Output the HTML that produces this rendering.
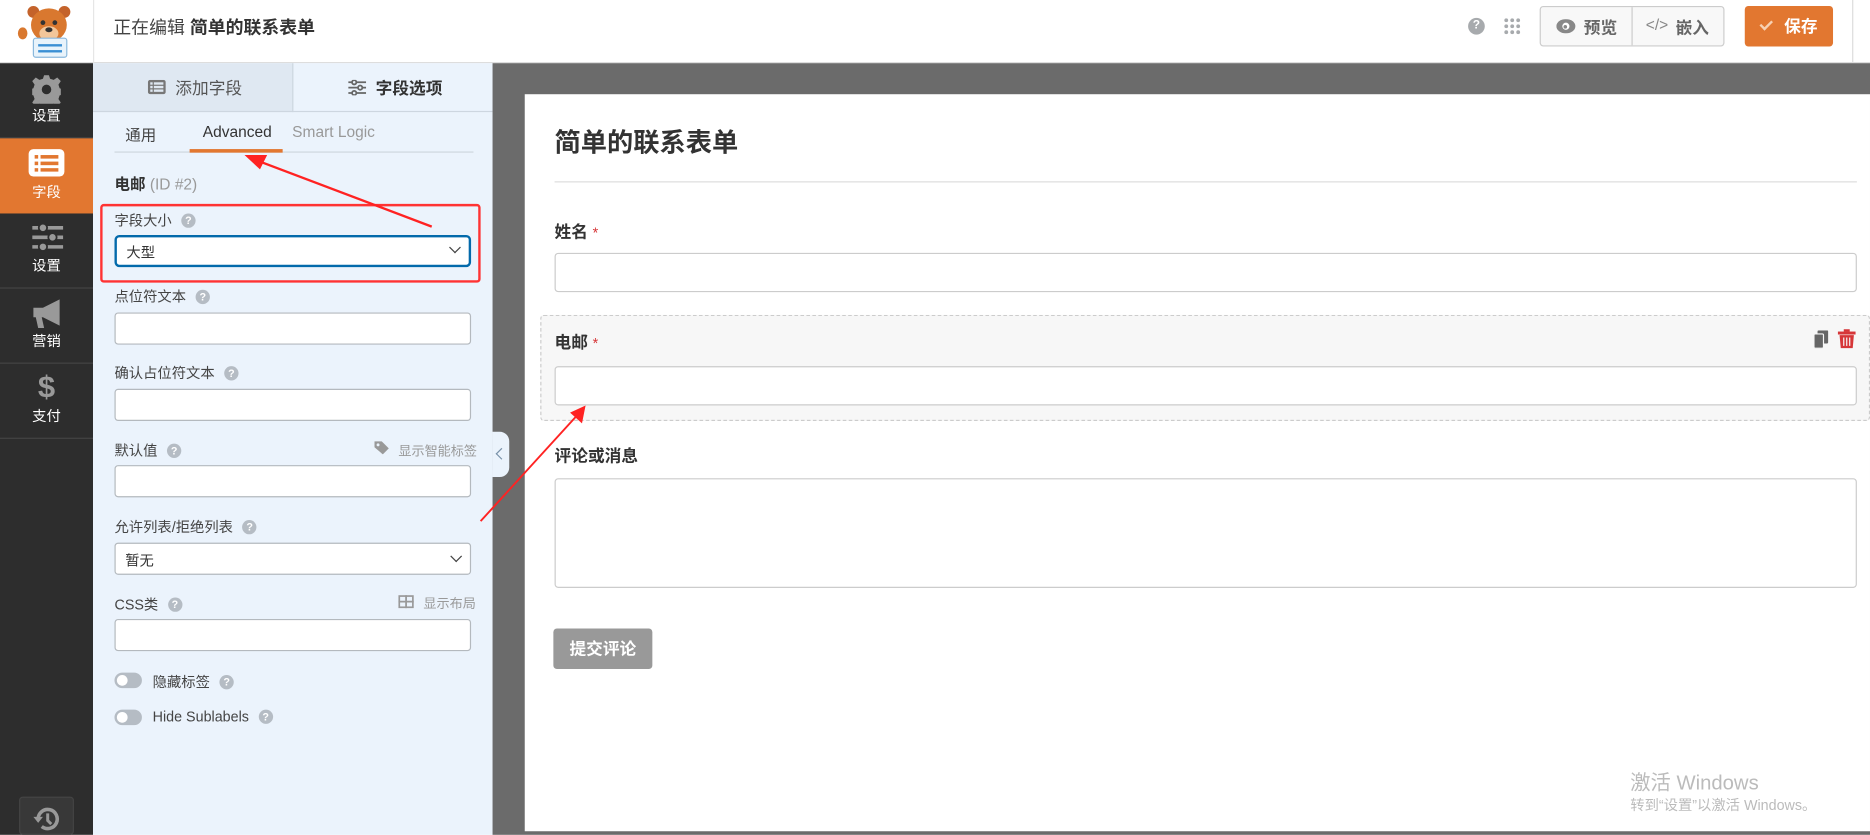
<!DOCTYPE html>
<html><head><meta charset="utf-8"><style>
*{box-sizing:border-box;margin:0;padding:0}
html,body{width:1870px;height:834px;overflow:hidden;background:#fff;font-family:"Liberation Sans","Noto Sans CJK SC",sans-serif}
#w{position:absolute;left:0;top:0;width:1568px;height:700px;transform:scale(1.19260);transform-origin:0 0}
.a{position:absolute}
.q{display:inline-block;width:12px;height:12px;border-radius:50%;background:#b5bcc4;color:#fff;font-size:9px;text-align:center;line-height:12px;font-weight:bold;margin-left:8px;vertical-align:1px}
.lbl{position:absolute;left:96px;font-size:12px;color:#444}
.inp{position:absolute;left:96px;width:299px;height:27px;background:#fff;border:1px solid #b4b9be;border-radius:3px}
.chev{position:absolute;right:8px;top:7px;width:7px;height:7px;border-right:1.5px solid #444;border-bottom:1.5px solid #444;transform:rotate(45deg)}
.sb{position:absolute;left:0;width:78px;height:63px;color:#fff;font-size:12px;text-align:center;border-bottom:1px solid #444}
.sb span{position:absolute;left:0;right:0;bottom:10px}
.fin{position:absolute;left:465px;width:1092px;background:#fff;border:1px solid #ccc;border-radius:3px}
.fl{position:absolute;left:465px;font-size:14px;color:#333;font-weight:bold}
.tg{position:absolute;left:96px;width:23px;height:13px;border-radius:7px;background:#b5bcc4}
.tg:after{content:"";position:absolute;left:2px;top:2px;width:9px;height:9px;border-radius:50%;background:#fff}
</style></head><body><div id="w">
<!-- top bar -->
<div class="a" style="left:0;top:0;width:1568px;height:53px;background:#fff;border-bottom:1px solid #ddd"></div>
<div class="a" style="left:78px;top:0;width:1px;height:53px;background:#e5e5e5"></div>
<svg class="a" style="left:14px;top:4px" width="52" height="46" viewBox="0 0 52 46">
<circle cx="14" cy="6" r="5" fill="#c4632b"/><circle cx="40" cy="6" r="5" fill="#c4632b"/>
<ellipse cx="27" cy="17" rx="15" ry="14" fill="#d9782f"/><ellipse cx="27" cy="24" rx="8" ry="6" fill="#f2c69a"/>
<circle cx="22" cy="15" r="2" fill="#333"/><circle cx="32" cy="15" r="2" fill="#333"/><ellipse cx="27" cy="21" rx="3" ry="2" fill="#333"/>
<ellipse cx="5" cy="24" rx="4" ry="5" fill="#d9782f"/>
<rect x="14" y="28" width="28" height="16" rx="2" fill="#e8f3fb" stroke="#8ab8dc"/>
<rect x="18" y="33" width="20" height="2" fill="#3a8fd4"/><rect x="18" y="38" width="20" height="2" fill="#3a8fd4"/></svg>
<div class="a" style="left:95px;top:12px;font-size:15px;color:#444">正在编辑 <b style="color:#333">简单的联系表单</b></div>
<div class="a" style="left:1231px;top:15px;width:14px;height:14px;border-radius:50%;background:#a7aaad;color:#fff;font-size:10px;font-weight:bold;text-align:center;line-height:14px">?</div>
<svg class="a" style="left:1261px;top:15px" width="14" height="14"><g fill="#a7aaad"><circle cx="2" cy="2" r="1.6"/><circle cx="7" cy="2" r="1.6"/><circle cx="12" cy="2" r="1.6"/><circle cx="2" cy="7" r="1.6"/><circle cx="7" cy="7" r="1.6"/><circle cx="12" cy="7" r="1.6"/><circle cx="2" cy="12" r="1.6"/><circle cx="7" cy="12" r="1.6"/><circle cx="12" cy="12" r="1.6"/></g></svg>
<div class="a" style="left:1291px;top:5px;width:155px;height:34px;border:1px solid #ccc;border-radius:3px;background:#f8f8f8"></div>
<div class="a" style="left:1368px;top:6px;width:1px;height:32px;background:#ccc"></div>
<svg class="a" style="left:1305px;top:16px" width="16" height="12"><ellipse cx="8" cy="6" rx="8" ry="6" fill="#888"/><circle cx="8" cy="6" r="3" fill="#fff"/><circle cx="7.5" cy="6.5" r="1.5" fill="#888"/></svg>
<div class="a" style="left:1328px;top:13px;font-size:14px;color:#666;font-weight:bold">预览</div>
<div class="a" style="left:1380px;top:13px;font-size:13px;color:#888">&lt;/&gt;</div>
<div class="a" style="left:1405px;top:13px;font-size:14px;color:#666;font-weight:bold">嵌入</div>
<div class="a" style="left:1463px;top:5px;width:74px;height:34px;border-radius:3px;background:#e27730;color:#fff;font-size:14px;font-weight:bold;line-height:34px;padding-left:33px">保存</div>
<div class="a" style="left:1476px;top:17px;width:10px;height:6px;border-left:2px solid #f7d1b3;border-bottom:2px solid #f7d1b3;transform:rotate(-45deg)"></div>
<div class="a" style="left:1553px;top:0;width:1px;height:53px;background:#ddd"></div>
<!-- sidebar -->
<div class="a" style="left:0;top:53px;width:78px;height:647px;background:#2d2d2d"></div>
<div class="sb" style="top:53px"><svg class="a" style="left:27px;top:10px" width="24" height="24" viewBox="0 0 24 24"><path fill="#999" d="M10 0h4l1 3 3 1 3-2 3 3-2 3 1 3 3 1v4l-3 1-1 3 2 3-3 3-3-2-3 1-1 3h-4l-1-3-3-1-3 2-3-3 2-3-1-3-3-1v-4l3-1 1-3-2-3 3-3 3 2 3-1z"/><circle cx="12" cy="12" r="4" fill="#2d2d2d"/></svg><span>设置</span></div>
<div class="sb" style="top:116px;background:#e27730;border:0"><div class="a" style="left:24px;top:9px;width:30px;height:23px;background:#fff;border-radius:4px"></div><svg class="a" style="left:29px;top:14px" width="20" height="14"><g fill="#e27730"><rect x="0" y="0" width="3" height="3"/><rect x="5" y="0" width="15" height="3"/><rect x="0" y="5.5" width="3" height="3"/><rect x="5" y="5.5" width="15" height="3"/><rect x="0" y="11" width="3" height="3"/><rect x="5" y="11" width="15" height="3"/></g></svg><span>字段</span></div>
<div class="sb" style="top:179px"><svg class="a" style="left:27px;top:8px" width="26" height="24"><g stroke="#999" stroke-width="3"><line x1="0" y1="4" x2="26" y2="4"/><line x1="0" y1="12" x2="26" y2="12"/><line x1="0" y1="20" x2="26" y2="20"/></g><g fill="#999" stroke="#2d2d2d" stroke-width="1.5"><circle cx="9" cy="4" r="3.5"/><circle cx="17" cy="12" r="3.5"/><circle cx="9" cy="20" r="3.5"/></g></svg><span>设置</span></div>
<div class="sb" style="top:242px"><svg class="a" style="left:26px;top:8px" width="28" height="26"><path fill="#999" d="M2 8h8l14-7v22l-14-7H9l2 9H6L4 16H2z"/></svg><span>营销</span></div>
<div class="sb" style="top:305px"><div class="a" style="left:0;right:0;top:4px;font-size:26px;font-weight:bold;color:#999">$</div><span>支付</span></div>
<div class="a" style="left:16px;top:668px;width:46px;height:32px;background:#383838;border:1px solid #444;border-radius:3px"></div>
<svg class="a" style="left:28px;top:677px" width="22" height="20" viewBox="0 0 22 20"><path d="M4 10a8 8 0 1 1 3 6" fill="none" stroke="#999" stroke-width="3"/><path d="M0 8h8l-4 5z" fill="#999"/><path d="M12 5v6l3 3" fill="none" stroke="#999" stroke-width="2.5"/></svg>
<!-- panel -->
<div class="a" style="left:78px;top:53px;width:335px;height:647px;background:#ebf3fc"></div>
<div class="a" style="left:78px;top:53px;width:168px;height:41px;background:#dfe8f2;border-right:1px solid #cdd6e0;border-bottom:1px solid #cdd6e0"></div>
<div class="a" style="left:246px;top:93px;width:167px;height:1px;background:#cdd6e0"></div>
<svg class="a" style="left:124px;top:67px" width="15" height="12"><rect width="15" height="12" rx="2" fill="#777"/><g fill="#dfe8f2"><rect x="2" y="2" width="2" height="2"/><rect x="5" y="2" width="8" height="2"/><rect x="2" y="5" width="2" height="2"/><rect x="5" y="5" width="8" height="2"/><rect x="2" y="8" width="2" height="2"/><rect x="5" y="8" width="8" height="2"/></g></svg>
<div class="a" style="left:147px;top:64px;font-size:14px;color:#555">添加字段</div>
<svg class="a" style="left:292px;top:67px" width="15" height="13"><g stroke="#666" stroke-width="1.5" fill="#ebf3fc"><line x1="0" y1="2" x2="15" y2="2"/><line x1="0" y1="6.5" x2="15" y2="6.5"/><line x1="0" y1="11" x2="15" y2="11"/><circle cx="5" cy="2" r="1.8"/><circle cx="10" cy="6.5" r="1.8"/><circle cx="5" cy="11" r="1.8"/></g></svg>
<div class="a" style="left:315px;top:64px;font-size:14px;color:#333;font-weight:bold">字段选项</div>
<div class="a" style="left:105px;top:103px;font-size:13px;color:#444">通用</div>
<div class="a" style="left:170px;top:103px;font-size:13px;color:#333">Advanced</div>
<div class="a" style="left:245px;top:103px;font-size:13px;color:#999">Smart Logic</div>
<div class="a" style="left:96px;top:127px;width:301px;height:1px;background:#ced6de"></div>
<div class="a" style="left:159px;top:125px;width:78px;height:3px;background:#e27730"></div>
<div class="a" style="left:96px;top:144px;font-size:13px;color:#333"><b>电邮</b> <span style="color:#999">(ID #2)</span></div>
<div class="lbl" style="top:176px">字段大小<span class="q">?</span></div>
<div class="inp" style="top:197px;border:2px solid #036aab;border-radius:4px"><div class="a" style="left:8px;top:4px;font-size:12px;color:#333">大型</div><div class="chev" style="top:5px"></div></div>
<div class="a" style="left:84px;top:171px;width:319px;height:66px;border:2px solid #f33;border-radius:3px"></div>
<div class="lbl" style="top:240px">点位符文本<span class="q">?</span></div>
<div class="inp" style="top:262px"></div>
<div class="lbl" style="top:304px">确认占位符文本<span class="q">?</span></div>
<div class="inp" style="top:326px"></div>
<div class="lbl" style="top:369px">默认值<span class="q">?</span></div>
<svg class="a" style="left:314px;top:370px" width="13" height="11"><path d="M0 0h6l6 6-5 5-7-6z" fill="#999"/><circle cx="3" cy="3" r="1.2" fill="#ebf3fc"/></svg>
<div class="a" style="left:334px;top:370px;font-size:11px;color:#999">显示智能标签</div>
<div class="inp" style="top:390px"></div>
<div class="lbl" style="top:433px">允许列表/拒绝列表<span class="q">?</span></div>
<div class="inp" style="top:455px"><div class="a" style="left:8px;top:5px;font-size:12px;color:#333">暂无</div><div class="chev"></div></div>
<div class="lbl" style="top:498px">CSS类<span class="q">?</span></div>
<svg class="a" style="left:334px;top:499px" width="13" height="11"><rect x=".75" y=".75" width="11.5" height="9.5" fill="none" stroke="#999" stroke-width="1.5"/><line x1="6.5" y1="0" x2="6.5" y2="11" stroke="#999" stroke-width="1.5"/><line x1="0" y1="5.5" x2="13" y2="5.5" stroke="#999" stroke-width="1.5"/></svg>
<div class="a" style="left:355px;top:498px;font-size:11px;color:#999">显示布局</div>
<div class="inp" style="top:519px"></div>
<div class="tg" style="top:564px"></div><div class="a" style="left:128px;top:563px;font-size:12px;color:#444">隐藏标签<span class="q">?</span></div>
<div class="tg" style="top:595px"></div><div class="a" style="left:128px;top:594px;font-size:12px;color:#444">Hide Sublabels<span class="q">?</span></div>
<!-- preview area -->
<div class="a" style="left:413px;top:53px;width:1155px;height:647px;background:#6b6b6b"></div>
<div class="a" style="left:413px;top:362px;width:14px;height:38px;background:#ebf3fc;border-radius:0 8px 8px 0"></div>
<div class="a" style="left:417px;top:377px;width:7px;height:7px;border-left:1.5px solid #7890a8;border-bottom:1.5px solid #7890a8;transform:rotate(45deg)"></div>
<div class="a" style="left:440px;top:79px;width:1128px;height:618px;background:#fff"></div>
<div class="a" style="left:465px;top:102px;font-size:22px;font-weight:bold;color:#333">简单的联系表单</div>
<div class="a" style="left:465px;top:152px;width:1092px;height:1px;background:#ddd"></div>
<div class="fl" style="top:184px">姓名 <span style="color:#d63638;font-weight:normal;font-size:12px">*</span></div>
<div class="fin" style="top:212px;height:33px"></div>
<div class="a" style="left:453px;top:264px;width:1115px;height:89px;background:#f7f7f7;border:1px dashed #ccc;border-radius:3px"></div>
<div class="fl" style="top:277px">电邮 <span style="color:#d63638;font-weight:normal;font-size:12px">*</span></div>
<svg class="a" style="left:1521px;top:277px" width="12" height="15"><rect x="3" y="0" width="9" height="11" rx="1" fill="#666"/><rect x="0" y="3" width="8" height="12" rx="1" fill="#666" stroke="#f7f7f7"/></svg>
<svg class="a" style="left:1541px;top:276px" width="15" height="16"><rect x="0" y="2" width="15" height="2.5" fill="#d63638"/><rect x="5" y="0" width="5" height="2" fill="#d63638"/><path d="M1.5 5h12l-1 11h-10z" fill="#d63638"/><g stroke="#f7f7f7" stroke-width="1"><line x1="5" y1="7" x2="5" y2="14"/><line x1="7.5" y1="7" x2="7.5" y2="14"/><line x1="10" y1="7" x2="10" y2="14"/></g></svg>
<div class="fin" style="top:307px;height:33px"></div>
<div class="fl" style="top:372px">评论或消息</div>
<div class="fin" style="top:401px;height:92px"></div>
<div class="a" style="left:464px;top:527px;width:83px;height:34px;background:#999;border-radius:3px;color:#fff;font-size:14px;font-weight:bold;text-align:center;line-height:34px">提交评论</div>
<div class="a" style="left:1367px;top:642px;font-size:17px;color:#bbb">激活 Windows</div>
<div class="a" style="left:1367px;top:666px;font-size:12px;color:#bbb">转到“设置”以激活 Windows。</div>
<!-- arrows -->
<svg class="a" style="left:0;top:0" width="1568" height="700">
<path d="M362 190 L214 134" stroke="#f22" stroke-width="2" fill="none"/><path d="M205 130 L224 130 L218 142 Z" fill="#f22"/>
<path d="M403 437 L486 346" stroke="#f22" stroke-width="1.6" fill="none"/><path d="M491 340 L478 346 L488 355 Z" fill="#f22"/>
</svg>
</div></body></html>
